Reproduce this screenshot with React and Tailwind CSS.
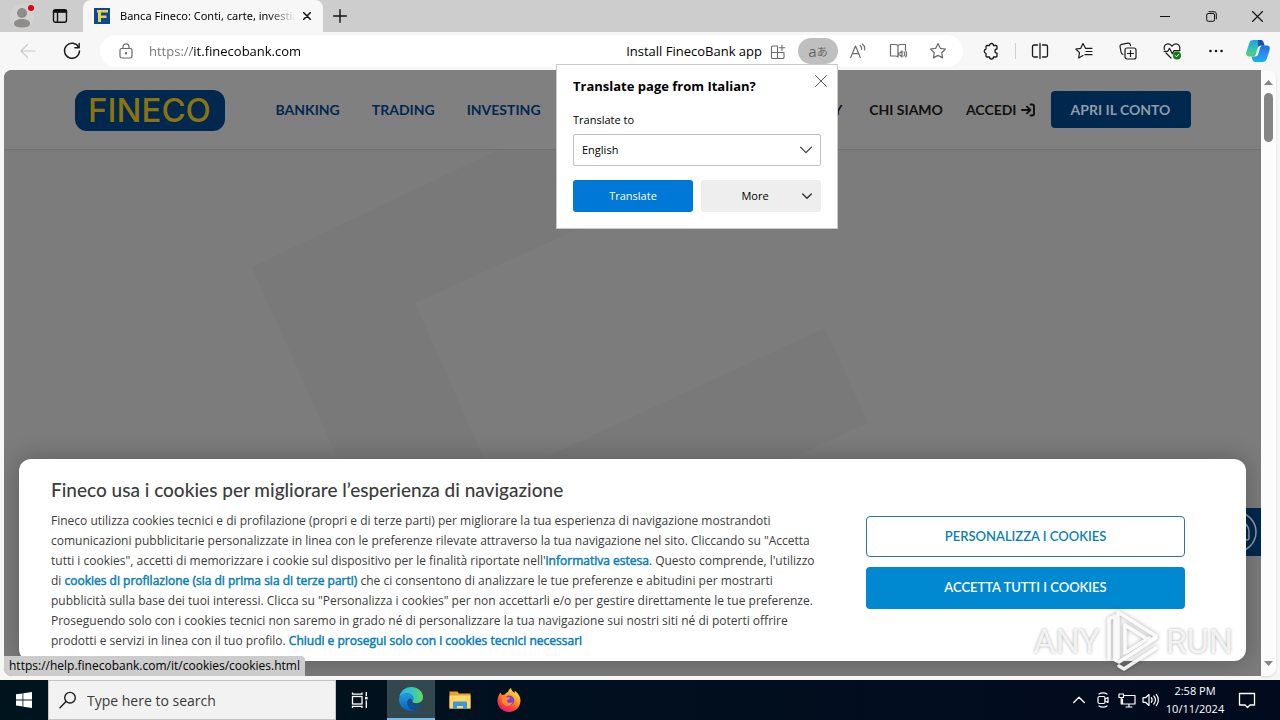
import React from "react";

const UI = "font-['Open_Sans','Noto_Sans',sans-serif]";

function Icon({ size = 18, box = 18, children, className = "", sw = 1.2 }) {
  return (
    <svg
      width={size}
      height={size}
      viewBox={`0 0 ${box} ${box}`}
      fill="none"
      stroke="currentColor"
      strokeWidth={sw}
      strokeLinecap="round"
      strokeLinejoin="round"
      className={`shrink-0 ${className}`}
      aria-hidden="true"
    >
      {children}
    </svg>
  );
}

function TabStrip() {
  return (
    <div className="flex h-8 shrink-0 bg-[#cdcdcd] text-[#111]">
      <button aria-label="Profile" className="flex h-8 w-11 items-center justify-center">
        <svg width="26" height="26" viewBox="0 0 26 26" aria-hidden="true">
          <circle cx="13" cy="13" r="12" fill="#d4d2d0" />
          <circle cx="13" cy="10" r="5" fill="#8f8d8b" />
          <path d="M5 20.500c0-3 3.500-4.500 8-4.500s8 1.500 8 4.500-3.500 4-8 4-8-1-8-4z" fill="#8f8d8b" />
          <circle cx="22" cy="5" r="3" fill="#e3000f" />
        </svg>
      </button>
      <button aria-label="Tab actions" className="flex h-8 w-8 items-center justify-center">
        <Icon size={16} box={16} sw={1.4}>
          <rect x="1.500" y="1.700" width="13" height="12.600" rx="2" />
          <path d="M1.500 4h13M5.500 4v10" />
          <path d="M2 3h12" strokeWidth="2.400" />
        </Icon>
      </button>
      <div className="ml-[7px] flex h-8 w-60 items-center rounded-t-lg bg-[#f7f7f7] pl-[11px] pr-2">
        <svg width="16" height="16" viewBox="0 0 16 16" className="shrink-0" aria-hidden="true">
          <rect width="16" height="16" fill="#0a4a94" />
          <path d="M3 2h11v2.500H7v3h5.500V10H7v4H4V4.500H3z" fill="#f3cf4a" />
        </svg>
        <span className="ml-[10px] mr-1 min-w-0 flex-1 overflow-hidden whitespace-nowrap font-['Noto_Sans',sans-serif] text-[11px] text-black [mask-image:linear-gradient(to_right,black_84%,transparent)]">
          Banca Fineco: Conti, carte, investimenti
        </span>
        <button aria-label="Close tab" className="flex h-6 w-4 items-center justify-center">
          <Icon size={8} box={8} sw={1.5}>
            <path d="M0.500 0.500l7 7M7.500 0.500l-7 7" />
          </Icon>
        </button>
      </div>
      <button aria-label="New tab" className="flex h-8 w-[34px] items-center justify-center">
        <Icon size={14} box={14} sw={1.4}>
          <path d="M7 0.700v12.600M0.700 7h12.600" />
        </Icon>
      </button>
      <div className="ml-auto flex">
        <button aria-label="Minimize" className="flex w-[46px] items-center justify-center">
          <Icon size={10} box={10} sw={1}><path d="M0 5.500h10" /></Icon>
        </button>
        <button aria-label="Restore" className="flex w-[46px] items-center justify-center">
          <Icon size={11} box={11} sw={1}>
            <rect x="0.700" y="2.500" width="7.800" height="7.800" rx="1.500" />
            <path d="M3 0.700h5a2.300 2.300 0 0 1 2.300 2.300v5" />
          </Icon>
        </button>
        <button aria-label="Close window" className="flex w-[46px] items-center justify-center">
          <Icon size={11} box={11} sw={1.1}><path d="M0.500 0.500l10 10M10.500 0.500l-10 10" /></Icon>
        </button>
      </div>
    </div>
  );
}

function TranslatePopup() {
  return (
    <div className="absolute right-0 top-full z-30 w-[282px] border border-[#c9c9c9] bg-white px-4 pb-4 text-xs text-black">
      <div className="flex h-11 items-center justify-between">
        <h2 className="whitespace-nowrap text-[13px] font-bold">Translate page from Italian?</h2>
        <button aria-label="Close" className="-mr-1.5 mb-3 flex h-5 w-3 items-center justify-center text-[#555]">
          <Icon size={12} box={12} sw={1}><path d="M0.500 0.500l11 11M11.500 0.500l-11 11" /></Icon>
        </button>
      </div>
      <label htmlFor="lang" className="block h-[25px] text-[11px] leading-[21px]">Translate to</label>
      <div className="relative">
        <select id="lang" className="block h-8 w-full appearance-none rounded-[2px] border border-[#c2c2c2] bg-white px-2 text-[11px]">
          <option>English</option>
        </select>
        <Icon size={12} box={12} sw={1.1} className="pointer-events-none absolute right-[9px] top-[10px] text-[#333]">
          <path d="M0.500 3.200L6 8.700l5.500-5.500" />
        </Icon>
      </div>
      <div className="mt-[14px] grid grid-cols-2 gap-2 text-[11px]">
        <button className="h-8 rounded-[3px] bg-[#0078d7] text-white">Translate</button>
        <button className="relative h-8 rounded-[3px] bg-[#eeeeee] pr-3">
          More
          <Icon size={10} box={10} sw={1.4} className="absolute right-[9px] top-[11px] text-[#333]">
            <path d="M0.700 3L5 7.300 9.300 3" />
          </Icon>
        </button>
      </div>
    </div>
  );
}

function Toolbar() {
  const tool = "flex h-8 w-11 items-center justify-center";
  return (
    <div className="flex h-[38px] shrink-0 items-center bg-[#f7f7f7] pr-0.5 text-[#1b1b1b]">
      <button aria-label="Back" disabled className="ml-1.5 flex h-8 w-11 items-center justify-center text-[#c9c9c9]">
        <Icon size={16} box={16}><path d="M15 8H1M7.500 1.500L1 8l6.500 6.500" /></Icon>
      </button>
      <button aria-label="Reload" className={tool}>
        <Icon size={18} box={18} sw={1.4}>
          <path d="M15.600 5.200A7.500 7.500 0 1 0 16.500 9" />
          <path d="M16.200 1.500v4.300h-4.300" />
        </Icon>
      </button>
      <div className="ml-1.5 flex h-8 min-w-0 flex-1 items-center rounded-full bg-white pl-[18px] pr-[5px] text-[#6b6b6b]">
        <Icon size={16} box={16}>
          <rect x="2" y="5.500" width="12" height="9.500" rx="1.800" />
          <path d="M5 5.500V3.800a3 3 0 0 1 6 0v1.700" />
          <circle cx="8" cy="10.300" r="0.600" fill="currentColor" />
        </Icon>
        <input
          aria-label="Address"
          defaultValue="https://it.finecobank.com"
          className="ml-[15px] min-w-0 flex-1 bg-[linear-gradient(to_right,#737373_43px,black_43px)] bg-clip-text pt-px text-[13px] text-transparent outline-none"
        />
        <button className="flex items-center gap-2 whitespace-nowrap pt-px text-[13px] text-black">
          Install FinecoBank app
          <Icon size={16} box={16} sw={1.1} className="text-[#6b6b6b]">
            <path d="M7.500 2H2.500A1 1 0 0 0 1.500 3v10.500a1 1 0 0 0 1 1H13a1 1 0 0 0 1-1V8.500H1.500M7.500 2v12.500M12 1v5.500M9.300 3.700h5.500" />
          </Icon>
        </button>
        <div className="relative ml-3">
          <button aria-label="Translate" className="flex h-[26px] w-10 items-center justify-center rounded-full bg-[#bfbfbf] text-[#666]">
            <span className="text-[15px] leading-none">a</span>
            <span className="font-['Noto_Sans_CJK_JP',sans-serif] text-[11px] leading-none">あ</span>
          </button>
          <TranslatePopup />
        </div>
        <button aria-label="Read aloud" className="flex h-8 w-10 items-center justify-center">
          <Icon size={16} box={16}>
            <path d="M0.700 14.500L5.500 3l4.800 11.500M2.300 10.700h6.400M10 2.500c1.300.900 1.800 2.300 1.600 3.800M12.300 1c2 1.400 2.800 3.600 2.300 6" />
          </Icon>
        </button>
        <button aria-label="Immersive reader" className="flex h-8 w-10 items-center justify-center">
          <Icon size={18} box={18}>
            <path d="M9 3.500C8 2.500 7 2.500 5.500 2.500H1.500v11.500h4.500c1.500 0 2.500.300 3 1M9 3.500c1-1 2-1 3.500-1h4V8M9 3.500V15" />
            <path d="M9.500 11h1.500l2-2v6l-2-2H9.500zM15 10c.800 1 .800 3 0 4M16.700 9c1.200 1.800 1.200 4.200 0 6" />
          </Icon>
        </button>
        <button aria-label="Add to favorites" className="flex h-8 w-10 items-center justify-center">
          <Icon size={18} box={18}>
            <path d="M9 1.500l2.300 4.800 5.200.700-3.800 3.700.9 5.200L9 13.400l-4.600 2.500.9-5.200L1.500 7l5.200-.7z" />
          </Icon>
        </button>
      </div>
      <button aria-label="Extensions" className={`${tool} ml-1.5`}>
        <Icon size={18} box={18} sw={1.3}>
          <path d="M4 4.500a1 1 0 0 1 1-1h2.500a2 2 0 0 1 4 0H14a1 1 0 0 1 1 1V7a2.100 2.100 0 1 0 0 4.200V14a1 1 0 0 1-1 1h-2.500a2 2 0 0 1-4 0H5a1 1 0 0 1-1-1v-2.700a2.200 2.200 0 0 1 0-4.300z" />
        </Icon>
      </button>
      <span className="mx-0.5 h-4 w-px bg-[#cfcfcf]" />
      <button aria-label="Split screen" className={tool}>
        <Icon size={18} box={18} sw={1.3}>
          <path d="M6.500 3H3a1.500 1.500 0 0 0-1.500 1.500v9A1.500 1.500 0 0 0 3 15h3.500M11.500 3H15a1.500 1.500 0 0 1 1.500 1.500v9A1.500 1.500 0 0 1 15 15h-3.500M9 1.500v15" />
        </Icon>
      </button>
      <button aria-label="Favorites" className={tool}>
        <Icon size={18} box={18} sw={1.2}>
          <path d="M10.500 6.300L8 1.500 5.700 6.300.8 7l3.700 3.600-.9 5.400 4.400-2.500M10.500 6.300h6.500M11 9.500h6M10 12.700h7" />
        </Icon>
      </button>
      <button aria-label="Collections" className={tool}>
        <Icon size={18} box={18} sw={1.2}>
          <rect x="6" y="6" width="11" height="11" rx="2" />
          <path d="M11.500 8.500v6M8.500 11.500h6M4 12.500C2.500 12 2.200 11 2 10L1 4.500A2 2 0 0 1 2.600 2.300L9 1.200a2 2 0 0 1 2.300 1.500l.2 1" />
        </Icon>
      </button>
      <button aria-label="Browser essentials" className={tool}>
        <Icon size={18} box={18} sw={1.2}>
          <path d="M1.300 7.500C0.500 3.500 3 1.800 5 1.800c1.900 0 3.200 1 4 2.500.8-1.500 2.100-2.500 4-2.500s4.500 1.700 3.700 5.700M3 11l5 5M1 9.300h3.800l1.700-3 2.800 5.500 1.700-3.200h6" />
          <circle cx="14" cy="13.500" r="4" fill="#107c10" stroke="none" />
          <path d="M12.300 13.600l1.200 1.200 2.300-2.500" stroke="#fff" strokeWidth="1" />
        </Icon>
      </button>
      <button aria-label="Settings and more" className={tool}>
        <Icon size={16} box={16} sw={0}>
          <g fill="currentColor"><circle cx="2.500" cy="8" r="1.300" /><circle cx="8" cy="8" r="1.300" /><circle cx="13.500" cy="8" r="1.300" /></g>
        </Icon>
      </button>
      <button aria-label="Copilot" className="flex h-8 w-10 items-center justify-center">
        <svg width="24" height="24" viewBox="0 0 24 24" aria-hidden="true">
          <defs>
            <linearGradient id="cpA" x1="0" y1="0" x2="0" y2="1"><stop offset="0" stopColor="#1aa0e8" /><stop offset="0.600" stopColor="#35c6b4" /><stop offset="1" stopColor="#5ecb6b" /></linearGradient>
            <linearGradient id="cpB" x1="0" y1="0" x2="0" y2="1"><stop offset="0" stopColor="#1f6fd8" /><stop offset="0.500" stopColor="#2d8cf0" /><stop offset="1" stopColor="#12b4f0" /></linearGradient>
          </defs>
          <path d="M7.500 1h7c2 0 2.600 1 3.200 3l.8 2.500h-3.500c-2 0-2.800 1-3.500 3L10 15c-.7 2-1.600 2.500-3.500 2.500H3c-2.600 0-3.300-2-2.500-5L3.300 4C4 2 5.300 1 7.500 1z" fill="url(#cpA)" />
          <path d="M16.500 23h-7c-2 0-2.600-1-3.200-3l-.8-2.500H9c2 0 2.800-1 3.500-3L14 9c.7-2 1.600-2.500 3.500-2.500H21c2.600 0 3.300 2 2.500 5L20.700 20c-.7 2-2 3-4.200 3z" fill="url(#cpB)" />
          <path d="M14.500 1c2 0 2.600 1 3.200 3l.8 2.500h-3.500c-1.300 0-2.200.5-2.800 1.500L12 1z" fill="#1b4fb0" />
        </svg>
      </button>
    </div>
  );
}

function SiteHeader() {
  return (
    <header className="relative border-b border-[#717171] bg-[#808080] font-['Lato',sans-serif]">
      <div className="mx-auto flex h-[79px] max-w-[1116px] items-center text-sm font-bold text-[#111]">
        <a href="#home" className="mt-0.5 flex h-[41px] w-[150px] items-center justify-center rounded-xl bg-[#00284f] font-['Inter',sans-serif] text-[33px] leading-none font-medium text-[#8b7410]">
          FINECO
        </a>
        <nav className="ml-[51px] flex gap-8 text-[#00284f]">
          <a href="#banking">BANKING</a>
          <a href="#trading">TRADING</a>
          <a href="#investing">INVESTING</a>
        </nav>
        <nav className="ml-auto flex items-center">
          <a href="#y" className="mr-[27px]">Y</a>
          <a href="#chi" className="mr-[23px]">CHI SIAMO</a>
          <a href="#accedi" className="mr-4 flex items-center gap-1">
            ACCEDI
            <Icon size={14} box={14} sw={1.9}>
              <path d="M1 7h8M6 3.700L9.300 7 6 10.300M9.500 1.500H11a2 2 0 0 1 2 2v7a2 2 0 0 1-2 2H9.500" />
            </Icon>
          </a>
          <a href="#apri" className="flex h-[37px] w-[140px] items-center justify-center rounded bg-[#00284f] text-[#8f9ba8]">
            APRI IL CONTO
          </a>
        </nav>
      </div>
    </header>
  );
}

function CookieDialog() {
  const link = "text-[#0b7fb8] [-webkit-text-stroke:0.500px_#0b7fb8]";
  return (
    <section
      aria-label="Cookies"
      className="absolute bottom-[15px] left-[15px] right-[15px] flex justify-between rounded-xl bg-white px-8 pb-[10px] pt-[18px] font-['Lato',sans-serif] text-[#3c3c3c] shadow-[0_0_24px_2px_rgba(0,0,0,0.220)]"
    >
      <div>
        <h1 className="text-[19px] leading-[26px] font-medium whitespace-nowrap">Fineco usa i cookies per migliorare l’esperienza di navigazione</h1>
        <p className="mt-2 whitespace-nowrap font-['Open_Sans',sans-serif] text-xs leading-[20px]">
          Fineco utilizza cookies tecnici e di profilazione (propri e di terze parti) per migliorare la tua esperienza di navigazione mostrandoti<br />
          comunicazioni pubblicitarie personalizzate in linea con le preferenze rilevate attraverso la tua navigazione nel sito. Cliccando su "Accetta<br />
          tutti i cookies", accetti di memorizzare i cookie sul dispositivo per le finalità riportate nell'<a href="#info" className={link}>informativa estesa</a>. Questo comprende, l'utilizzo<br />
          di <a href="#prof" className={link}>cookies di profilazione (sia di prima sia di terze parti)</a> che ci consentono di analizzare le tue preferenze e abitudini per mostrarti<br />
          pubblicità sulla base dei tuoi interessi. Clicca su "Personalizza i cookies" per non accettarli e/o per gestire direttamente le tue preferenze.<br />
          Proseguendo solo con i cookies tecnici non saremo in grado né di personalizzare la tua navigazione sui nostri siti né di poterti offrire<br />
          prodotti e servizi in linea con il tuo profilo. <a href="#close" className={link}>Chiudi e prosegui solo con i cookies tecnici necessari</a>
        </p>
      </div>
      <div className="mr-[29px] mt-[39px] flex w-[319px] flex-col gap-[10px] text-[13px] font-semibold">
        <button className="h-[41px] rounded border border-[#2678ae] text-[#0b7fb8]">PERSONALIZZA I COOKIES</button>
        <button className="h-[42px] rounded bg-[#0088d1] text-white">ACCETTA TUTTI I COOKIES</button>
      </div>
    </section>
  );
}

function Watermark() {
  return (
    <div className="pointer-events-none absolute bottom-[2px] right-[28px] z-20 flex items-center font-['Roboto',sans-serif] text-[34px] leading-none text-white/80 [text-shadow:0_0_3px_rgba(0,0,0,0.350)]">
      <span>ANY</span>
      <svg width="58" height="66" viewBox="0 0 58 66" fill="none" stroke="#fff" strokeOpacity="0.900" strokeWidth="3.500" strokeLinejoin="round" strokeLinecap="round" className="mx-1 drop-shadow-[0_0_2px_rgba(0,0,0,0.350)]" aria-hidden="true">
        <path d="M14 50V4l38 24-6 5L21 17v28l24-15" />
        <path d="M5 51V11l6-3v44l4 2 37-24M15 58l5 3 32-21" />
      </svg>
      <span>RUN</span>
    </div>
  );
}

function Page() {
  return (
    <div className="flex min-h-0 flex-1 bg-[#f7f7f7] px-1 pb-1">
      <main className="relative min-w-0 flex-1 overflow-hidden rounded-tl-lg rounded-bl-lg bg-[#7c7c7c]">
        <SiteHeader />
        <svg width="900" height="400" viewBox="0 0 900 400" className="block" aria-hidden="true">
          <path d="M494 0L248 117l95 212h146L411 153 748 0zM495 329L821 178l43 95L740 329z" fill="#797979" />
        </svg>
        <div className="absolute right-0 top-[438px] flex h-12 w-12 items-center justify-center bg-[#00284f]">
          <svg width="42" height="42" viewBox="0 0 42 42" fill="none" stroke="#8f9ba8" strokeWidth="1.500" aria-hidden="true">
            <circle cx="20" cy="21" r="20" />
            <path d="M10 29v-8a11 11 0 0 1 23 0v6a2 2 0 0 1-4 0v-6" />
          </svg>
        </div>
        <CookieDialog />
        <Watermark />
        <div className="absolute bottom-0 left-0 z-10 h-5 rounded-tr bg-[#cccccc] px-[5px] text-xs leading-5 whitespace-nowrap text-black">
          https://help.finecobank.com/it/cookies/cookies.html
        </div>
      </main>
      <div className="flex w-[15px] flex-col items-center justify-between rounded-br-lg rounded-tr-lg bg-[#fcfcfc] pb-2.5 pt-2.5 text-[#858585] shadow-sm">
        <svg width="9" height="5" viewBox="0 0 9 5" aria-hidden="true"><path d="M0 5L4.500 0 9 5z" fill="currentColor" /></svg>
        <div className="mb-auto mt-2 h-[49px] w-[9px] rounded-full bg-[#858585]" />
        <svg width="9" height="5" viewBox="0 0 9 5" aria-hidden="true"><path d="M0 0l4.500 5L9 0z" fill="currentColor" /></svg>
      </div>
    </div>
  );
}

function Taskbar() {
  return (
    <footer className="flex h-10 shrink-0 items-stretch bg-linear-to-r from-[#00141e] to-[#020a1e] text-white">
      <button aria-label="Start" className="flex w-12 items-center justify-center">
        <svg width="16" height="16" viewBox="0 0 16 16" fill="#fff" aria-hidden="true">
          <path d="M0 2.300l6.500-.9v6.100H0zM7.300 1.300L16 0v7.500H7.300zM0 8.400h6.500v6.100L0 13.600zM7.300 8.400H16V16l-8.700-1.300z" />
        </svg>
      </button>
      <div className="flex w-72 items-center border border-[#c4c4c4] bg-[#f2f2f2] pl-2.5">
        <label htmlFor="search" aria-label="Search" className="text-[#1b1b1b]">
          <Icon size={18} box={18} sw={1.4}>
            <circle cx="11" cy="6.700" r="5.300" /><path d="M7 10.500L1 16.800" />
          </Icon>
        </label>
        <input id="search" aria-label="Search" placeholder="Type here to search" className="ml-[10px] w-52 bg-transparent text-[14px] placeholder:text-[#3a3a3a]" />
      </div>
      <button aria-label="Task view" className="flex w-[51px] items-center justify-center pr-1">
        <svg width="18" height="18" viewBox="0 0 18 18" fill="none" stroke="#fff" strokeWidth="1.300" aria-hidden="true">
          <rect x="1.500" y="5.500" width="9.500" height="7.500" />
          <path d="M1.500 1.500v1.700H11V1.500M1.500 17v-1.700H11V17M15.300 1v4M15.300 9.500V17" />
          <rect x="14" y="5.800" width="2.600" height="2.600" fill="#fff" stroke="none" />
        </svg>
      </button>
      <button aria-label="Microsoft Edge" className="flex w-12 items-center justify-center border-b-2 border-[#76b9ed] bg-[#33474f]">
        <svg width="24" height="24" viewBox="0 0 24 24" aria-hidden="true">
          <defs>
            <linearGradient id="eA" x1="0" y1="0.300" x2="1" y2="0.300"><stop offset="0" stopColor="#2fb4e8" /><stop offset="0.500" stopColor="#30c5c8" /><stop offset="1" stopColor="#63d957" /></linearGradient>
            <linearGradient id="eB" x1="0" y1="0" x2="0" y2="1"><stop offset="0" stopColor="#1f9de0" /><stop offset="1" stopColor="#0b62b8" /></linearGradient>
          </defs>
          <path d="M0.200 11C1 4.500 6 0 12.200 0 19 0 24 4.600 24 10c0 4-3 6.200-6.500 6.200-3 0-4.300-1-4.300-1.900 0-.7 1.200-1 1.200-2.900 0-2.700-2.600-4.900-6-4.900-4 0-7.200 2-8.200 4.500z" fill="url(#eA)" />
          <path d="M0 12.500C0 9 3.500 6.500 8 6.500c3.800 0 6.400 2.200 6.400 4.700 0 1-.4 1.700-.8 2.300C12 10.500 8.500 12 8.300 15.500c-.2 4 3.500 7.500 7 7.700-1 .5-2 .8-3.300.8C5 24 0 18.500 0 12.500z" fill="url(#eB)" />
          <path d="M8.300 15.500c0-2.200 1.500-4 3.600-4-1.200 4.500 5 8.500 10.500 5.800-1.500 3.300-4.400 5.600-7.400 5.900-3.800-.3-6.700-3.900-6.700-7.700z" fill="#0f4f96" />
        </svg>
      </button>
      <button aria-label="File Explorer" className="flex w-[49px] items-center justify-center">
        <svg width="22" height="20" viewBox="0 0 22 20" aria-hidden="true">
          <path d="M0.500 1.500h8l1.500 2h11.500v15h-21z" fill="#e9a227" />
          <path d="M0.500 5.500h21v13h-21z" fill="#ffd868" />
          <path d="M4 19v-6.500a1 1 0 0 1 1-1h12a1 1 0 0 1 1 1V19h-4v-3H8v3z" fill="#3f97dc" />
        </svg>
      </button>
      <button aria-label="Firefox" className="flex w-[49px] items-center justify-center">
        <svg width="24" height="24" viewBox="0 0 24 24" aria-hidden="true">
          <defs>
            <linearGradient id="ff" x1="0.800" y1="0" x2="0.200" y2="1"><stop offset="0" stopColor="#fff04a" /><stop offset="0.400" stopColor="#ff9a1f" /><stop offset="0.700" stopColor="#ff4040" /><stop offset="1" stopColor="#e0147a" /></linearGradient>
          </defs>
          <path d="M3.500 4.500L5 7l2.500-.2C8.500 5 9.500 4.500 11 4c.5-1.800 1.500-3 3-4 .3 2.500 2 3.500 3.500 5 .3-1 .2-1.800 0-2.500C21.500 5 23.500 9 23.500 12.500 23.500 19 18.500 24 12 24S.5 19 .5 12.500C.5 9.500 2 6.500 3.500 4.500z" fill="url(#ff)" />
          <circle cx="12.300" cy="12.500" r="5" fill="#7a3fe0" />
          <path d="M4.500 9c3-1.500 5 .2 7.500.3 1 .1 1.300.7.500 1.400C11.500 11.500 10 11.500 10 13c.3 2 3 2.500 6 1-1.500 4-6.500 5-9.500 2.500C4.500 14.500 4 12 4.500 9z" fill="#ff8a25" />
        </svg>
      </button>
      <div className="ml-auto flex items-center">
        <button aria-label="Show hidden icons" className="flex w-6 justify-center"><Icon size={12} box={12} sw={1.3}><path d="M0.700 8.500L6 3.200l5.300 5.300" /></Icon></button>
        <button aria-label="Meet now" className="flex w-6 justify-center">
          <Icon size={16} box={16} sw={1.2}><rect x="3" y="4.500" width="7" height="7" rx="1.500" /><path d="M10 7l3-1.500v5L10 9M4 2c2.500-1.500 5.500-1.500 8 0M4 14c2.500 1.500 5.500 1.500 8 0" /></Icon>
        </button>
        <button aria-label="Network" className="flex w-6 justify-center">
          <Icon size={18} box={18} sw={1.2}><path d="M6 4.500h11v8.500H4.500V8M8 16h6M11 13v3M1 3h4.500v3.500H1zM3.200 6.500V13h1.300" /></Icon>
        </button>
        <button aria-label="Volume" className="flex w-6 justify-center">
          <Icon size={18} box={18} sw={1.2}><path d="M1 6.700h2.500L7 3.500v11l-3.500-3.200H1zM9.300 6.700c1 1.300 1 3.300 0 4.600M11.800 5c1.900 2.300 1.900 5.700 0 8M14.300 3.300c2.700 3.300 2.700 8.100 0 11.400" /></Icon>
        </button>
        <div className="w-16 text-center text-[11px] leading-[18px] whitespace-nowrap">
          <div>2:58 PM</div>
          <div>10/11/2024</div>
        </div>
        <button aria-label="Notifications" className="ml-[10px] mr-[23px] flex w-5 justify-center">
          <Icon size={18} box={18} sw={1.300}><path d="M1.500 2.500h15v11.500H12l-2.500 2.500L7 14H1.500z" /></Icon>
        </button>
      </div>
    </footer>
  );
}

export default function App() {
  return (
    <div className={`flex h-screen flex-col overflow-hidden ${UI}`}>
      <TabStrip />
      <Toolbar />
      <Page />
      <Taskbar />
    </div>
  );
}
